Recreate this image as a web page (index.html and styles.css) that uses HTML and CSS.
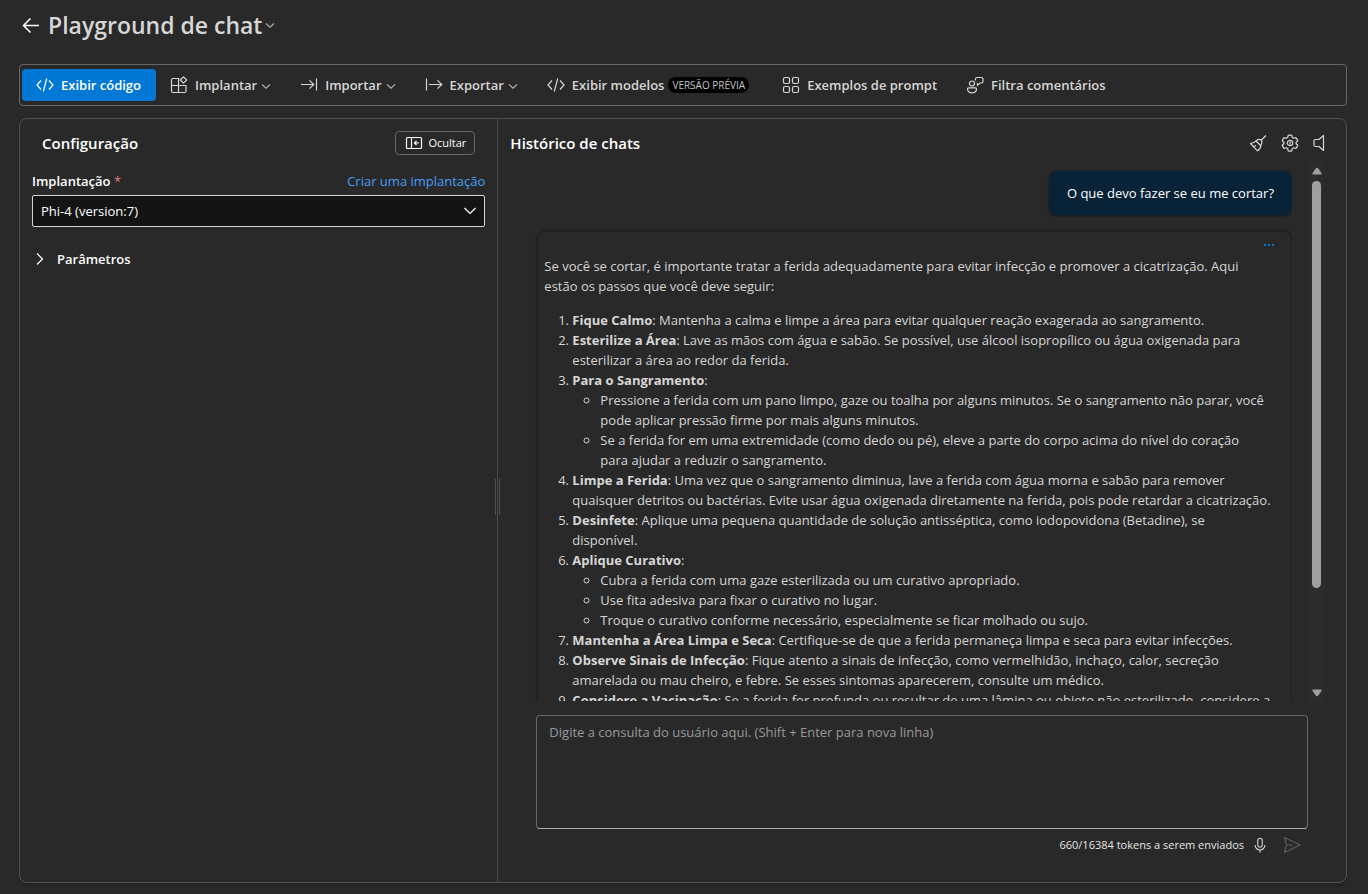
FILE: index.html
```html
<!DOCTYPE html>
<html lang="pt-BR">
<head>
<meta charset="utf-8">
<meta name="viewport" content="width=device-width, initial-scale=1">
<title>Playground de chat</title>
<link rel="stylesheet" href="styles.css">
</head>
<body>
<svg class="sprite" aria-hidden="true">
  <symbol id="i-code" viewBox="0 0 20 20"><path d="M6 5.500 2 10l4 4.500M14 5.500 18 10l-4 4.500M11.700 3.500l-3.400 13"/></symbol>
  <symbol id="i-down" viewBox="0 0 10 10"><path d="M1 3.500 5 7.200l4-3.700"/></symbol>
  <symbol id="i-grid" viewBox="0 0 20 20"><rect x="2.500" y="2.500" width="6" height="6" rx="1.500"/><rect x="11.500" y="2.500" width="6" height="6" rx="1.500"/><rect x="2.500" y="11.500" width="6" height="6" rx="1.500"/><rect x="11.500" y="11.500" width="6" height="6" rx="1.500"/></symbol>
</svg>

<div class="page">
  <header class="title-bar">
    <a class="back" href="#" aria-label="Voltar"><svg class="icon" viewBox="0 0 20 20"><path d="M18 10.500H2.500M9.500 3.500l-7 7 7 7"/></svg></a>
    <h1 class="title">Playground de chat</h1>
    <button class="title-menu" type="button" aria-label="Mais"><svg class="chevron"><use href="#i-down"/></svg></button>
  </header>

  <nav class="toolbar">
    <button class="tool tool-primary" type="button"><svg class="icon"><use href="#i-code"/></svg>Exibir código</button>
    <button class="tool" type="button"><svg class="icon" viewBox="0 0 20 20"><path d="M10.500 3.500H4A1.500 1.500 0 0 0 2.500 5v11A1.500 1.500 0 0 0 4 17.500h11.500A1.500 1.500 0 0 0 17 16v-5.500H2.500M9.500 3.500v14M14.500 1.800l3.200 3.200-3.200 3.200L11.300 5z" stroke-linejoin="round"/></svg>Implantar<svg class="chevron"><use href="#i-down"/></svg></button>
    <button class="tool" type="button"><svg class="icon" viewBox="0 0 20 20"><path d="M2 9.500h12.500M10.500 5.300l4.200 4.200-4.200 4.200M17.500 3.500v12"/></svg>Importar<svg class="chevron"><use href="#i-down"/></svg></button>
    <button class="tool" type="button"><svg class="icon" viewBox="0 0 20 20"><path d="M2.500 3.500v12M5 9.500h12.500M13.500 5.300l4.200 4.200-4.200 4.200"/></svg>Exportar<svg class="chevron"><use href="#i-down"/></svg></button>
    <button class="tool" type="button"><svg class="icon"><use href="#i-code"/></svg>Exibir modelos<span class="badge">VERSÃO PRÉVIA</span></button>
    <button class="tool" type="button"><svg class="icon"><use href="#i-grid"/></svg>Exemplos de prompt</button>
    <button class="tool" type="button"><svg class="icon" viewBox="0 0 20 20"><circle cx="7" cy="8.500" r="2.500"/><path d="M3.500 12.800h7a1 1 0 0 1 1 1c0 2.500-2 4-4.500 4s-4.500-1.500-4.500-4a1 1 0 0 1 1-1zM10.500 5.500V4A1.500 1.500 0 0 1 12 2.500h4.500A1.500 1.500 0 0 1 18 4v2.500A1.500 1.500 0 0 1 16.500 8H15l-2.500 2.200V8"/></svg>Filtra comentários</button>
  </nav>

  <main class="workspace">
    <section class="config">
      <div class="config-head">
        <h2 class="heading">Configuração</h2>
        <button class="hide-button" type="button"><svg class="icon" viewBox="0 0 20 20"><rect x="2.500" y="4.500" width="15" height="11" rx="1"/><path d="M7.500 4.500v11M15 10h-4.500M12.500 8l-2 2 2 2"/></svg>Ocultar</button>
      </div>
      <div class="field-head">
        <label class="label" for="deployment">Implantação <span class="required">*</span></label>
        <a class="link" href="#">Criar uma implantação</a>
      </div>
      <div class="select-box">
        <select class="select" id="deployment"><option>Phi-4 (version:7)</option></select>
        <svg class="select-arrow" viewBox="0 0 16 16"><path d="m2.500 5 5.500 5.500L13.500 5"/></svg>
      </div>
      <button class="accordion" type="button"><svg class="accordion-arrow" viewBox="0 0 16 16"><path d="m5 2.500 5.500 5.500L5 13.500"/></svg>Parâmetros</button>
    </section>

    <div class="splitter" role="separator" aria-orientation="vertical"><span class="grip"></span></div>

    <section class="chat">
      <div class="chat-head">
        <h2 class="heading">Histórico de chats</h2>
        <div class="chat-actions">
          <button class="icon-button" type="button" aria-label="Limpar chat"><svg class="icon" viewBox="0 0 20 20"><path stroke-linejoin="round" d="M18 2.500l-4.500 4.500M8.500 7.500q2.500-2 4.500-.5 2 2 0 5M8.500 7.500Q6.500 10 2.500 10.500l7 7.300q3.200-1.800 3.500-5.800M7.500 7.500l5.800 5.700M5.500 13.500l2.500-1"/></svg></button>
          <button class="icon-button" type="button" aria-label="Configurações do chat"><svg class="icon" viewBox="0 0 20 20"><path stroke-linejoin="round" d="M8.200 2.300q1.800-.5 3.600 0l.5 2.200 1.400.8 2.200-.7q1.300 1.400 1.900 3.200L16.100 9.300v1.500l1.700 1.500q-.6 1.800-1.900 3.200l-2.200-.7-1.400.8-.5 2.200q-1.800.5-3.600 0l-.5-2.200-1.400-.8-2.200.7q-1.300-1.400-1.900-3.200l1.700-1.500V9.300L2.200 7.800q.6-1.800 1.900-3.200l2.200.7 1.400-.8z"/><circle cx="10" cy="10" r="2.700"/><path d="M10 8.500v3"/></svg></button>
          <button class="icon-button" type="button" aria-label="Som"><svg class="icon" viewBox="0 0 20 20"><path stroke-linejoin="round" d="M11.500 2.500v15L7 13.500H3.500A1.500 1.500 0 0 1 2 12V8a1.500 1.500 0 0 1 1.500-1.500H7z"/></svg></button>
        </div>
      </div>

      <div class="history">
        <div class="messages">
          <p class="bubble">O que devo fazer se eu me cortar?</p>
          <article class="answer">
            <button class="more" type="button" aria-label="Mais opções"><svg class="dots" viewBox="0 0 12 4"><path d="M1 1h2v2H1zM5 1h2v2H5zM9 1h2v2H9z"/></svg></button>
            <p class="intro">Se você se cortar, é importante tratar a ferida adequadamente para evitar infecção e promover a cicatrização. Aqui estão os passos que você deve seguir:</p>
            <ol class="steps">
              <li><strong>Fique Calmo</strong>: Mantenha a calma e limpe a área para evitar qualquer reação exagerada ao sangramento.</li>
              <li><strong>Esterilize a Área</strong>: Lave as mãos com água e sabão. Se possível, use álcool isopropílico ou água oxigenada para esterilizar a área ao redor da ferida.</li>
              <li><strong>Para o Sangramento</strong>:
                <ul class="substeps">
                  <li>Pressione a ferida com um pano limpo, gaze ou toalha por alguns minutos. Se o sangramento não parar, você pode aplicar pressão firme por mais alguns minutos.</li>
                  <li>Se a ferida for em uma extremidade (como dedo ou pé), eleve a parte do corpo acima do nível do coração para&nbsp;ajudar a reduzir o sangramento.</li>
                </ul>
              </li>
              <li><strong>Limpe a Ferida</strong>: Uma vez que o sangramento diminua, lave a ferida com água morna e sabão para remover quaisquer detritos ou bactérias. Evite usar água oxigenada diretamente na ferida, pois pode retardar a cicatrização.</li>
              <li><strong>Desinfete</strong>: Aplique uma pequena quantidade de solução antisséptica, como iodopovidona (Betadine), se disponível.</li>
              <li><strong>Aplique Curativo</strong>:
                <ul class="substeps">
                  <li>Cubra a ferida com uma gaze esterilizada ou um curativo apropriado.</li>
                  <li>Use fita adesiva para fixar o curativo no lugar.</li>
                  <li>Troque o curativo conforme necessário, especialmente se ficar molhado ou sujo.</li>
                </ul>
              </li>
              <li><strong>Mantenha a Área Limpa e Seca</strong>: Certifique-se de que a ferida permaneça limpa e seca para evitar infecções.</li>
              <li><strong>Observe Sinais de Infecção</strong>: Fique atento a sinais de infecção, como vermelhidão, inchaço, calor, secreção amarelada ou mau cheiro, e febre. Se esses sintomas aparecerem, consulte um médico.</li>
              <li><strong>Considere a Vacinação</strong>: Se a ferida for profunda ou resultar de uma lâmina ou objeto não esterilizado, considere a</li>
            </ol>
          </article>
        </div>
        <div class="scrollbar" aria-hidden="true">
          <svg class="scroll-arrow" viewBox="0 0 10 8"><path d="M4 1.200q1-1 2 0L9.500 6Q10 7.500 8.800 7.500H1.200Q0 7.500.5 6z"/></svg>
          <div class="track"><div class="thumb"></div></div>
          <svg class="scroll-arrow" viewBox="0 0 10 8"><path d="M4 6.800q1 1 2 0L9.500 2Q10 .5 8.800.5H1.200Q0 .5.5 2z"/></svg>
        </div>
      </div>

      <form class="composer">
        <textarea class="prompt" aria-label="Consulta do usuário" placeholder="Digite a consulta do usuário aqui. (Shift + Enter para nova linha)"></textarea>
        <div class="composer-foot">
          <span class="tokens">660/16384 tokens a serem enviados</span>
          <button class="icon-button mic" type="button" aria-label="Microfone"><svg class="icon" viewBox="0 0 20 20"><rect x="7.500" y="2.500" width="5" height="10" rx="2.500"/><path d="M4.500 10a5.500 5.500 0 0 0 11 0M10 15.500v3"/></svg></button>
          <button class="icon-button send" type="button" aria-label="Enviar"><svg class="icon" viewBox="0 0 20 20"><path stroke-linejoin="round" d="M2.500 2.500 18 10 2.500 17.500 4.500 10zM4.500 10H11"/></svg></button>
        </div>
      </form>
    </section>
  </main>
</div>
</body>
</html>
```

FILE: styles.css
```css
* { box-sizing: border-box; }

body {
  margin: 0;
  background: #292929;
  color: #fff;
  font: 13px/20px "Open Sans", "Noto Sans", sans-serif;
}

h1, h2, p, ol, ul { margin: 0; }

button {
  padding: 0;
  border: 0;
  background: none;
  color: inherit;
  font: inherit;
}

a { color: inherit; text-decoration: none; }

svg { flex: none; fill: none; stroke: currentColor; stroke-width: 1.2; }

.sprite { display: none; }
.icon { width: 20px; height: 20px; }
.chevron { width: 10px; height: 10px; color: #adadad; }

.page {
  display: flex;
  flex-direction: column;
  height: 100vh;
  padding: 8px 21px 11px 19px;
}

.title-bar {
  display: flex;
  align-items: center;
  height: 34px;
  margin-bottom: 22px;
  padding-left: 2px;
}
.back { display: flex; margin-right: 7px; }
.back .icon { stroke-width: 1.5; }
.title { color: #d6d6d6; font-size: 23px; line-height: 32px; font-weight: 600; }
.title-menu { display: flex; margin-left: 3px; }

.toolbar {
  display: flex;
  align-items: center;
  margin-bottom: 12px;
  padding: 4px 2px;
  border: 1px solid #666;
  border-radius: 4px;
}
.tool {
  display: flex;
  align-items: center;
  height: 32px;
  padding: 0 15px 0 13px;
  border-radius: 4px;
  color: #d6d6d6;
  font-weight: 600;
  white-space: nowrap;
}
.tool .icon { margin-right: 6px; }
.tool .chevron { margin: 2px 0 0 4px; }
.tool-primary { background: #0078d4; color: #fff; }
.badge {
  margin: 0 4px;
  padding: 0 4px;
  border-radius: 8px;
  background: #000;
  color: #c4c4c4;
  font-size: 10px;
  line-height: 16px;
  font-weight: 400;
}

.workspace {
  display: flex;
  flex: 1;
  min-height: 0;
  border: 1px solid #525252;
  border-radius: 8px;
  box-shadow: 0 2px 4px rgba(0, 0, 0, .2);
}

.heading { font-size: 15px; line-height: 24px; font-weight: 600; }

.config { flex: none; width: 36%; padding: 12px; }
.config-head {
  display: flex;
  justify-content: space-between;
  align-items: center;
  padding: 0 10px;
}
.hide-button {
  display: flex;
  align-items: center;
  gap: 4px;
  height: 24px;
  padding: 0 8px;
  border: 1px solid #666;
  border-radius: 4px;
  font-size: 11px;
}
.field-head {
  display: flex;
  justify-content: space-between;
  margin: 16px 0 4px;
}
.label { font-weight: 600; }
.required { color: #e37d80; font-weight: 400; }
.link { color: #479ef5; }

.select-box { display: grid; align-items: center; }
.select {
  grid-area: 1 / 1;
  width: 100%;
  height: 32px;
  padding: 0 8px;
  border: 1px solid #d6d6d6;
  border-radius: 2px;
  background: #141414;
  color: #fff;
  font: inherit;
  appearance: none;
}
.select-arrow {
  grid-area: 1 / 1;
  justify-self: end;
  width: 16px;
  height: 16px;
  margin-right: 7px;
  pointer-events: none;
}
.accordion {
  display: flex;
  align-items: center;
  gap: 9px;
  margin-top: 22px;
  font-weight: 600;
}
.accordion-arrow { width: 16px; height: 16px; }

.splitter {
  display: flex;
  flex: none;
  align-items: center;
  justify-content: center;
  width: 1px;
  padding-bottom: 8px;
  background: #474747;
}
.grip {
  flex: none;
  width: 5px;
  height: 36px;
  border: solid #525252;
  border-width: 0 1px;
}

.chat {
  display: flex;
  flex: 1;
  flex-direction: column;
  min-width: 0;
  padding: 12px 22px 21px 12px;
}
.chat-head { display: flex; justify-content: space-between; align-items: center; }
.chat-actions { display: flex; gap: 12px; margin-right: -8px; }
.icon-button { display: flex; color: #d6d6d6; }

.history {
  display: flex;
  flex: 1;
  gap: 17px;
  min-height: 0;
  margin-top: 8px;
  padding-left: 24px;
}
.messages {
  display: flex;
  flex: 1;
  flex-direction: column;
  min-width: 0;
  padding: 8px 0 0 3px;
  overflow: hidden;
}
.messages > * { flex: none; }
.bubble {
  align-self: flex-end;
  margin-bottom: 16px;
  padding: 12px 18px;
  border-radius: 8px;
  background: #082338;
  box-shadow: 0 1px 3px rgba(0, 0, 0, .5);
}
.answer {
  display: flex;
  flex-direction: column;
  padding: 7px 19px 7px 6px;
  border: 1px solid #1f1f1f;
  border-radius: 8px;
  box-shadow: 0 0 3px rgba(0, 0, 0, .4);
  color: #d6d6d6;
}
.more { display: flex; align-self: flex-end; margin: 4px -3px 9px; color: #0078d4; }
.dots { width: 12px; height: 4px; fill: currentColor; stroke: none; }
.intro { margin-bottom: 14px; }
.steps, .substeps { padding-left: 28px; }
.steps { list-style: decimal; }
.substeps { list-style: circle; }
strong { font-weight: 700; }

.scrollbar {
  display: flex;
  flex-direction: column;
  align-items: center;
  width: 15px;
  padding: 4px 0;
  background: #2c2c2c;
}
.scroll-arrow { width: 10px; height: 8px; fill: #9f9f9f; stroke: none; }
.track { flex: 1; width: 9px; padding: 6px 0; }
.thumb { height: 81%; border-radius: 5px; background: #9f9f9f; }

.composer { margin: 14px 16px 0 26px; }
.prompt {
  display: block;
  width: 100%;
  height: 114px;
  padding: 6px 12px;
  border: 1px solid #666;
  border-bottom-color: #adadad;
  border-radius: 4px;
  background: #292929;
  color: #fff;
  font: inherit;
  resize: none;
}
.prompt::placeholder { color: #999; opacity: 1; }
.composer-foot {
  display: flex;
  align-items: center;
  justify-content: flex-end;
  height: 32px;
  padding-right: 6px;
}
.tokens { margin-right: 7px; color: #e6e6e6; font-size: 11px; }
.mic { margin-right: 13px; }
.mic .icon { width: 18px; height: 18px; }
.send { color: #5c5c5c; }
```
